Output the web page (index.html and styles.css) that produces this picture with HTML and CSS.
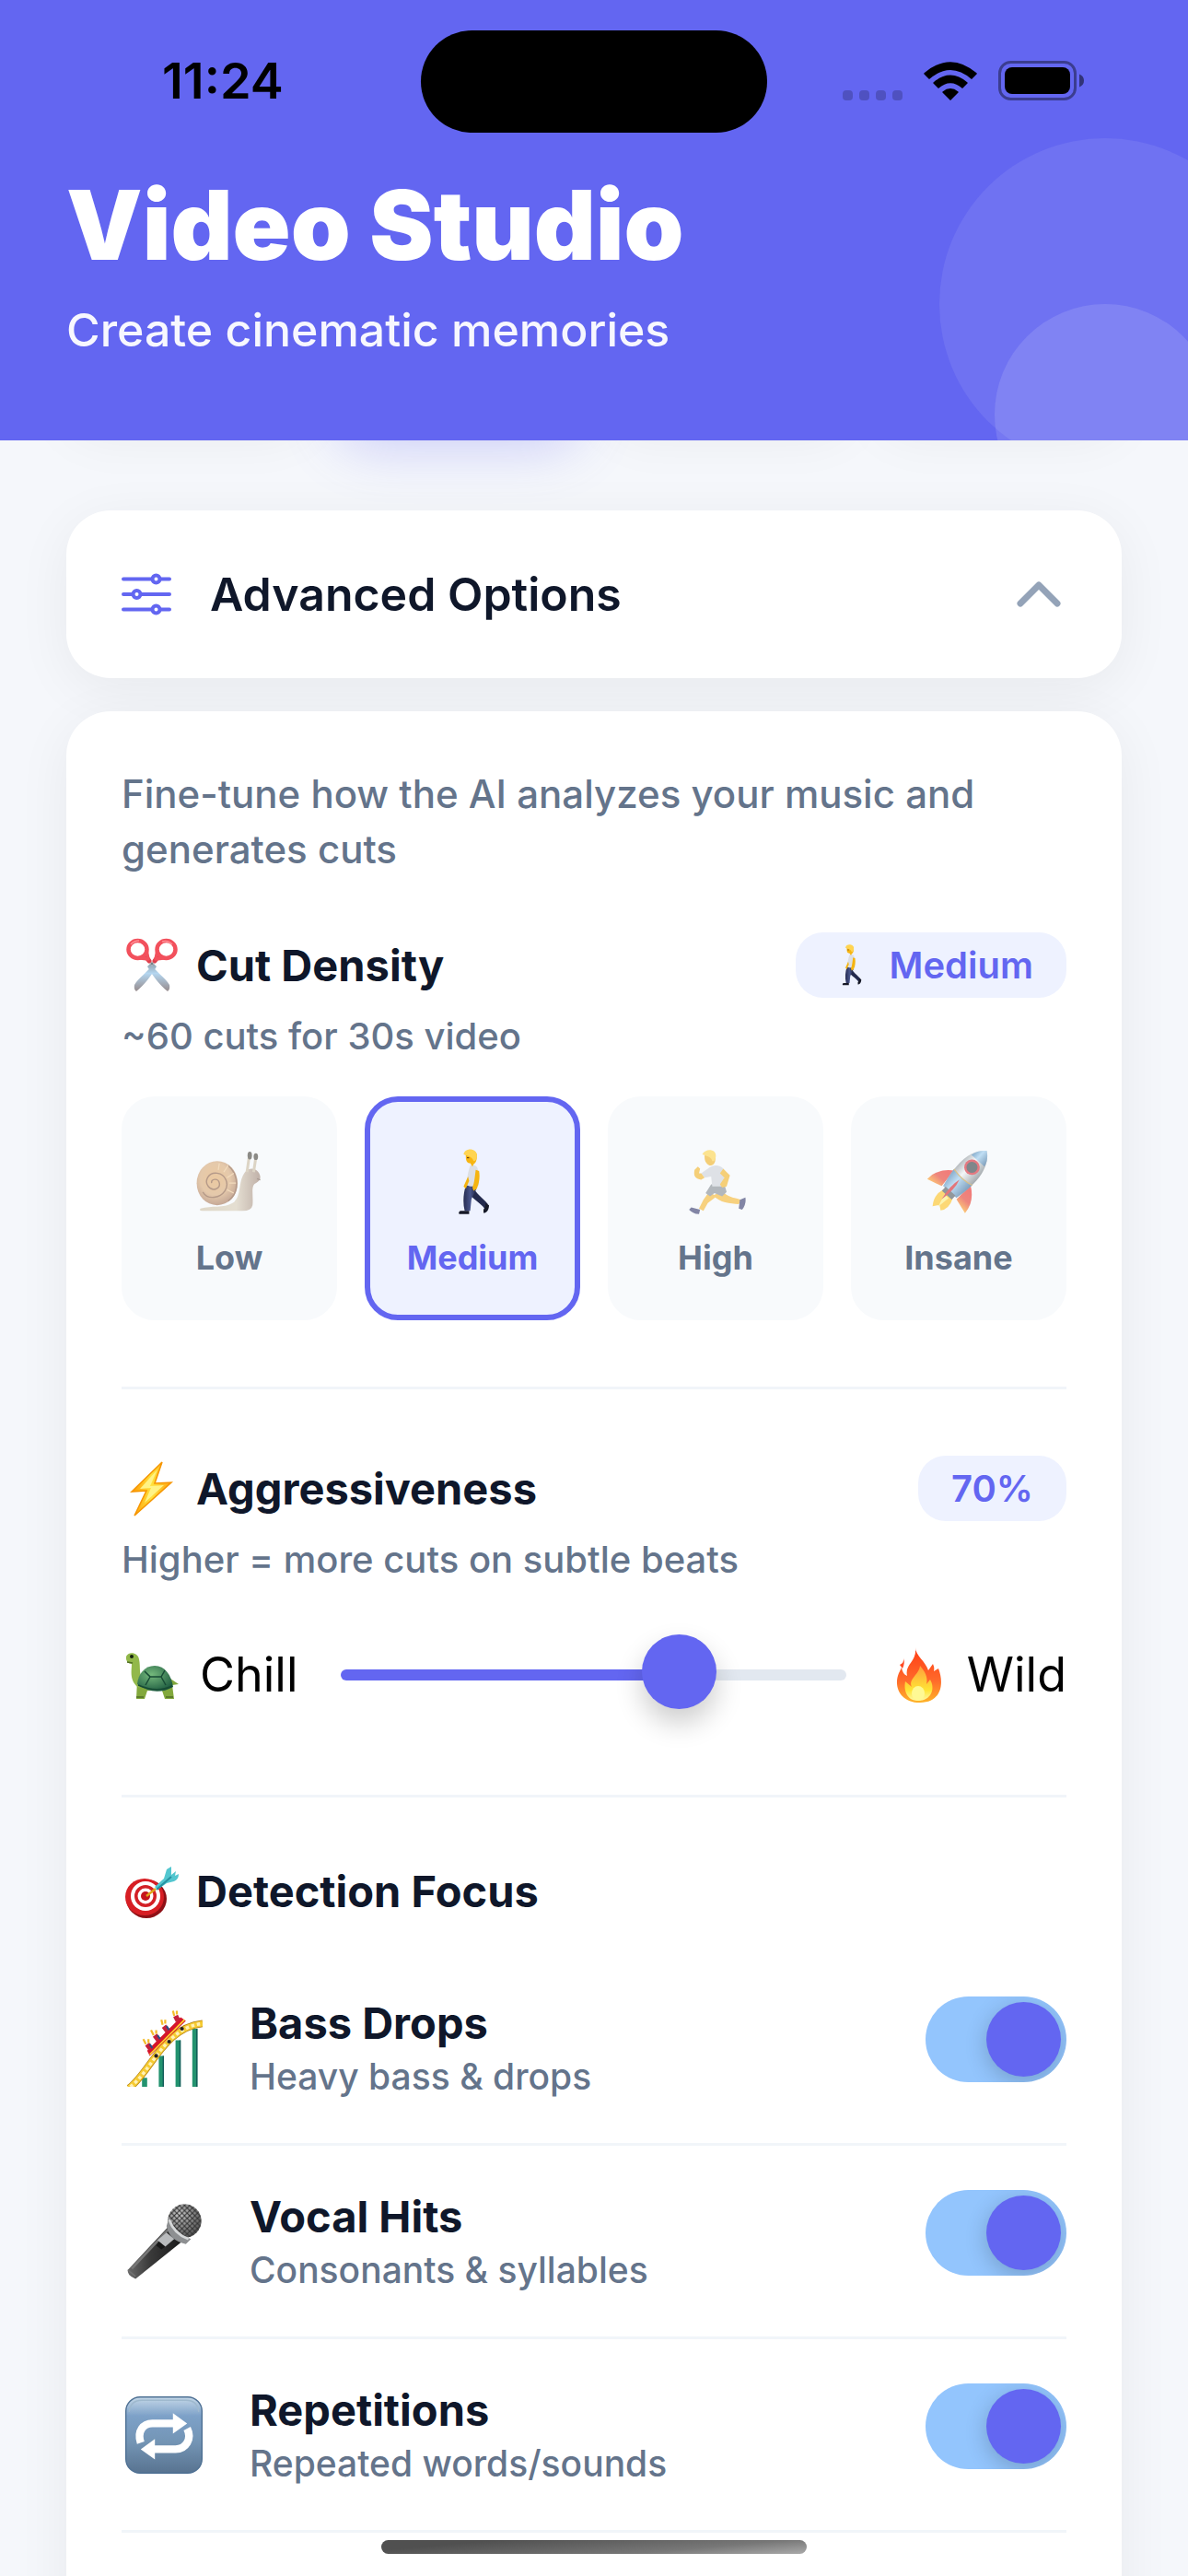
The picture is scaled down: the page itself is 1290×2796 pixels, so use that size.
FILE: index.html
```html
<!DOCTYPE html>
<html lang="en">
<head>
<meta charset="UTF-8">
<meta name="viewport" content="width=device-width, initial-scale=1.0">
<title>Video Studio</title>
<link rel="stylesheet" href="styles.css">
</head>
<body>
    <!-- Icon set -->
    <svg class="sprite" aria-hidden="true">
        <defs>
            <linearGradient id="blade" x1="0" y1="0" x2="0" y2="1"><stop offset="0" stop-color="#8fa0ab"/><stop offset=".35" stop-color="#b4d6f0"/><stop offset="1" stop-color="#968b8c"/></linearGradient>
            <linearGradient id="bolt-fill" x1="0" y1="0" x2="1" y2="0"><stop offset="0" stop-color="#ff9800"/><stop offset=".5" stop-color="#ffe23d"/><stop offset="1" stop-color="#ffa210"/></linearGradient>
            <linearGradient id="flame" x1="0" y1="0" x2="0" y2="1"><stop offset="0" stop-color="#ff3c14"/><stop offset=".6" stop-color="#ff6a2b"/><stop offset="1" stop-color="#ffb327"/></linearGradient>
            <linearGradient id="flame-core" x1="0" y1="0" x2="0" y2="1"><stop offset="0" stop-color="#ff9d3c"/><stop offset=".7" stop-color="#ffe535"/><stop offset="1" stop-color="#fff9a8"/></linearGradient>
            <radialGradient id="shell" cx=".45" cy=".4" r=".6"><stop offset="0" stop-color="#e3a965"/><stop offset=".6" stop-color="#d9a976"/><stop offset="1" stop-color="#a57455"/></radialGradient>
            <linearGradient id="slug" x1="0" y1="0" x2="1" y2="0"><stop offset="0" stop-color="#cfc1a5"/><stop offset=".6" stop-color="#d8cdb6"/><stop offset="1" stop-color="#9c8172"/></linearGradient>
            <radialGradient id="turtle-shell" cx=".4" cy=".35" r=".7"><stop offset="0" stop-color="#75b97c"/><stop offset="1" stop-color="#1d5b40"/></radialGradient>
            <linearGradient id="hull" x1="0" y1="0" x2="1" y2="0"><stop offset="0" stop-color="#8d9499"/><stop offset=".4" stop-color="#f2f4f5"/><stop offset="1" stop-color="#70787e"/></linearGradient>
            <linearGradient id="hull-blue" x1="0" y1="0" x2="1" y2="0"><stop offset="0" stop-color="#3c79ac"/><stop offset=".4" stop-color="#9ccdf0"/><stop offset="1" stop-color="#2f6393"/></linearGradient>
            <linearGradient id="fin" x1="0" y1="0" x2="0" y2="1"><stop offset="0" stop-color="#ef2222"/><stop offset=".6" stop-color="#e83a2a"/><stop offset="1" stop-color="#ffa51f"/></linearGradient>
            <linearGradient id="mic-body" x1="0" y1="0" x2="1" y2="0"><stop offset="0" stop-color="#6b6b6b"/><stop offset=".4" stop-color="#3b3b3b"/><stop offset="1" stop-color="#191919"/></linearGradient>
            <radialGradient id="mic-head" cx=".35" cy=".3" r=".8"><stop offset="0" stop-color="#c9c9c9"/><stop offset="1" stop-color="#4a4a4a"/></radialGradient>
            <pattern id="mesh" width="4" height="4" patternUnits="userSpaceOnUse"><path d="M0 0l4 4M4 0l-4 4" stroke="#333" stroke-width=".8"/></pattern>
            <linearGradient id="key" x1="0" y1="0" x2="0" y2="1"><stop offset="0" stop-color="#c5d8e8"/><stop offset=".25" stop-color="#7da1c8"/><stop offset=".6" stop-color="#7394b4"/><stop offset="1" stop-color="#587390"/></linearGradient>
            <linearGradient id="trousers" x1="0" y1="0" x2="1" y2="0"><stop offset="0" stop-color="#252b50"/><stop offset=".5" stop-color="#48558a"/><stop offset="1" stop-color="#202544"/></linearGradient>
        </defs>

        <symbol id="scissors" viewBox="0 0 60 60">
            <path d="M28 28C34 36 45 44 49 51Q50 56 47 58C39 52 30 40 25 31Z" fill="url(#blade)"/>
            <path d="M32 28C26 36 15 44 11 51Q10 56 13 58C21 52 30 40 35 31Z" fill="url(#blade)"/>
            <circle cx="30" cy="28" r="1.700" fill="#777e85"/>
            <path d="M27 25L24 21M33 25L36 21" stroke="#dd3f4c" stroke-width="5" stroke-linecap="round"/>
            <ellipse cx="14.500" cy="12.500" rx="10" ry="9.500" fill="none" stroke="#f2505c" stroke-width="4.500"/>
            <ellipse cx="45.500" cy="12.500" rx="10" ry="9.500" fill="none" stroke="#f2505c" stroke-width="4.500"/>
            <path d="M24 13l2 10-9-1M36 13l-2 10 9-1" fill="none" stroke="#f2505c" stroke-width="3.500" stroke-linejoin="round"/>
            <path d="M7 7q4-4 9-4M41 4q6-2 11 3" fill="none" stroke="#ff8e95" stroke-width="1.500"/>
        </symbol>

        <symbol id="walker" viewBox="0 0 60 60">
            <path d="M30 33c3 8 9 11 14 17l-3 4c-4-6-13-9-15-17z" fill="#232a4d"/>
            <path d="M24 33h10c0 5-4 9-5 13l-1 10h-5c-2-8-1-16 1-23z" fill="url(#trousers)"/>
            <path d="M19 56h8v3h-9q-1-2 1-3zM42 49l3 2c0 4-2 7-5 7v-3q2-2 2-6z" fill="#161927"/>
            <path d="M28 15c5-1 7 1 7 5l1 13q-5 2-11 0c0-8 1-12 3-18z" fill="#dcdfe4"/>
            <path d="M33 19l3 1c1 6 0 11-2 16l-3 2-1-3c2-5 2-9 3-16zM26 25l-4 9 2 2 3-7z" fill="#f5b40f"/>
            <path d="M24 5c1-5 9-5 10 0 0 4 0 7-3 9l-1 2-2-3c-4 0-4-4-4-8z" fill="#f7b512"/>
            <path d="M22 5c1-7 13-6 12 2 0 2-1 4-3 4-1-4-4-4-9-6z" fill="#ffd451"/>
            <path d="M25 8h2" stroke="#6b4510"/>
        </symbol>

        <symbol id="snail" viewBox="0 0 60 60">
            <path d="M4 54C14 51 25 54 33 49C41 44 38 31 43 23C47 16 54 17 57 22Q60 28 54 31C49 33 52 43 51 51Q50 56 42 56H6Q2 56 4 54Z" fill="url(#slug)"/>
            <path d="M46 21L48 7M52 21L54 8" stroke="#cabca1" stroke-width="2.500"/>
            <ellipse cx="48.500" cy="6" rx="2" ry="3.500" fill="#444038"/><ellipse cx="54" cy="7" rx="2" ry="3" fill="#444038"/>
            <ellipse cx="19" cy="31" rx="18.500" ry="20" fill="url(#shell)"/>
            <path d="M29 47C39 40 39 24 29 15M14 31c-1-4 6-5 7 0s-6 8-10 3 0-13 8-12 11 10 7 16-15 9-20 1" fill="none" stroke="#8a5c3e" stroke-width="1.200"/>
            <path d="M21 13l-1 6M29 15l-4 6M34 22l-6 4M36 31h-6M34 40l-6-3" stroke="#f0c894" stroke-width="1"/>
            <path d="M55 27l3 1" stroke="#765e50"/>
        </symbol>

        <symbol id="runner" viewBox="0 0 60 60">
            <path d="M24 39l7 4-8 6-4 7-4-2 4-8zM36 38c5 6 10 6 17 8l-2 4c-8-1-17-1-23-8z" fill="#f7b62d"/>
            <path d="M8 53l8 2-1 4c-4 0-7-2-9-4zM52 46l5-2q1 6-3 11l-3-1z" fill="#34396c"/>
            <path d="M26 32h12l2 7-4 4-7-3-4 3-4-3z" fill="#858b93"/>
            <path d="M23 18c4-4 11-4 14 0l1 7-1 9H27l-1-9-6 1-3-4z" fill="#cdd2d8"/>
            <path d="M37 18l6 6-3 10-4 1-2-3 4-6-4-4zM17 22l3 4-3 2c-6-1-7-4-6-9l3-3 2 2-1 4z" fill="#f4b322"/>
            <path d="M20 7c0-6 9-6 10 0 0 5-1 7-4 8-4 0-6-4-6-8z" fill="#f3b11e"/>
            <path d="M18 5c3-6 14-5 12 3q-1 4-3 3c-1-4-4-4-9-6z" fill="#ffd448"/>
        </symbol>

        <symbol id="rocket" viewBox="0 0 60 60">
            <g transform="rotate(42 30 30)">
                <path d="M20 25Q7 34 7 47l14-4zM40 25q13 9 13 22l-14-4z" fill="url(#fin)"/>
                <path d="M24 45h12q4 9-1 15l-4-3-4 5q-6-8-3-17z" fill="#ffc21c"/>
                <path d="M28 47h5l-2 12z" fill="#fff17d"/>
                <path d="M30-8c11 8 14 25 8 50H22C16 17 19 0 30-8z" fill="url(#hull)"/>
                <path d="M30-8c4 3 7 7 8 12H22c1-5 4-9 8-12z" fill="url(#hull-blue)"/>
                <path d="M19 24q11 3 22 0-1 9-3 18H22q-2-9-3-18z" fill="url(#hull-blue)"/>
                <path d="M19 24q11 3 22 0" stroke="#c69b3b" fill="none"/>
                <circle cx="30" cy="12" r="7" fill="#d82430"/><circle cx="30" cy="12" r="5" fill="#303a40"/>
                <path d="M24 41h12v5H24z" fill="#4d565c"/>
                <path d="M29 28q3 9 0 24-3-14 0-24z" fill="#d41f26"/>
            </g>
        </symbol>

        <symbol id="bolt" viewBox="0 0 60 60">
            <path d="M41 1L8 33l16-1L11 59l40-36-18 1z" fill="url(#bolt-fill)" stroke="#f69500" stroke-width="1.500"/>
            <path d="M36 9L17 30l12-1-7 16 21-19-15 1z" fill="#fff385"/>
        </symbol>

        <symbol id="turtle" viewBox="0 0 60 60">
            <path d="M14 36l-1 20h9l3-9h16l3 9h10l-2-15 7-1-9-6z" fill="#82a83c"/>
            <path d="M2 10C4 4 15 5 16 13c2 9-1 16 5 23l-5 8C5 37 8 25 8 18Q1 17 2 10z" fill="#92b84a"/>
            <path d="M14 40c1-11 8-20 19-20s18 10 20 23q-20 11-39-3z" fill="url(#turtle-shell)"/>
            <path d="M15 41q20 9 37 1M22 26l6 6-5 9M28 32h12l4-7M40 32l5 9" stroke="#174b35" stroke-width="1.500" fill="none"/>
            <circle cx="8" cy="10" r="2" fill="#14220e"/>
            <path d="M3 16l6 1M13 54h8M45 54h8" stroke="#506e24" stroke-width="1.500"/>
        </symbol>

        <symbol id="fire" viewBox="0 0 60 60">
            <path d="M26 0c0 9 11 15 14 25l5-7q2 4 1 8l5-3c7 18 2 37-20 37C9 60 2 42 8 28l3-6q1 7 6 9c-3-13 11-15 9-31z" fill="url(#flame)"/>
            <path d="M9 19q5-2 4-7 2 5-1 11z" fill="#ff4921"/>
            <path d="M31 20c-1 10-13 14-9 23l-7-6c-2 10 2 21 14 21 14 0 19-13 13-23l-4 5c2-8-2-14-7-20z" fill="url(#flame-core)"/>
            <ellipse cx="29" cy="50" rx="7" ry="8" fill="#fff994"/>
        </symbol>

        <symbol id="target" viewBox="0 0 60 60">
            <ellipse cx="24" cy="38" rx="22" ry="21" fill="#8e1016"/>
            <ellipse cx="22" cy="36" rx="21" ry="20" fill="#d71e24"/>
            <ellipse cx="23" cy="35" rx="16" ry="16" fill="#fff"/><ellipse cx="23" cy="35" rx="12" ry="12" fill="#d32026"/>
            <ellipse cx="23" cy="35" rx="8.500" ry="8.500" fill="#fff"/><ellipse cx="23" cy="35" rx="5" ry="5" fill="#c5161d"/>
            <path d="M24 35l10-8" stroke="#e1a71b" stroke-width="2.500"/>
            <path d="M33 25l10-9 3-10 5-3v9l5-4-1 5 4-2q0 6-5 8l-8 2-10 7z" fill="#52c6cf"/>
            <path d="M35 28l16-14" stroke="#2691a1" stroke-width="2"/>
        </symbol>

        <symbol id="coaster" viewBox="0 0 60 60">
            <path d="M28 36v24M41 24v36M54 15v45M15 53v7" stroke="#23936f" stroke-width="4"/>
            <path d="M29.500 36v24M42.500 24v36M55.500 15v45" stroke="#135c59" stroke-width="1"/>
            <path d="M3 61C20 48 30 14 60 11" fill="none" stroke="#b17e12" stroke-width="5.500"/>
            <path d="M3 61C20 48 30 14 60 11" fill="none" stroke="#f6cb32" stroke-width="4.500"/>
            <path d="M4 60C21 47 31 14 60 11" fill="none" stroke="#fff1b6" stroke-width="2.500" stroke-dasharray="2.500 2"/>
            <path d="M17 32L43 6l4 3-28 27z" fill="#d6142a"/>
            <path d="M19 35L46 8" stroke="#ffd42b" stroke-width="1.200"/>
            <path d="M20 31l-3-4M26 24l-3-4M33 17l-3-4M41 9l-2-4" stroke="#c5213a" stroke-width="4"/>
            <path d="M21 30l-2-3M27 23l-2-3M34 16l-2-3" stroke="#294f85" stroke-width="1.500"/>
            <path d="M16 27l-2-4M18 26v-3M22 20l-2-4M24 19v-3M29 12l-1-4M31 11V8M38 5l-1-4M40 4V1" stroke="#f3bd2b" stroke-width="1.600"/>
            <circle cx="24" cy="36" r="1.500" fill="#272021"/><circle cx="34" cy="25" r="1.500" fill="#272021"/><circle cx="44" cy="15" r="1.500" fill="#272021"/>
        </symbol>

        <symbol id="mic" viewBox="0 0 60 60">
            <path d="M33 19L2 52q-1 4 6 7l36-29z" fill="url(#mic-body)"/>
            <path d="M33 21L5 51" stroke="#777" stroke-width="2"/>
            <circle cx="46" cy="14" r="13" fill="url(#mic-head)"/><circle cx="46" cy="14" r="13" fill="url(#mesh)"/>
            <path d="M34 11q3 12 17 17l-4 4Q34 29 32 18z" fill="#8d8f91"/>
            <path d="M34 13q4 11 15 15" fill="none" stroke="#d6d8d9" stroke-width="2"/>
            <path d="M32 23l6 5-7 6-6-5z" fill="#b9bbbd"/><path d="M26 30l5 4-3 2-4-3z" fill="#171717"/>
            <path d="M2 52l6 5" stroke="#737373"/>
        </symbol>

        <symbol id="repeat" viewBox="0 0 60 60">
            <rect x=".5" y=".5" width="59" height="59" rx="11" fill="url(#key)" stroke="#4f7194"/>
            <path d="M3 12Q4 3 13 3h34q9 0 10 9" fill="none" stroke="#9fb9ce" stroke-width="1"/>
            <path d="M12 36c-3-9 2-15 9-15h17M48 25c4 8-1 16-9 16H22" fill="none" stroke="#fff" stroke-width="6"/>
            <path d="M37 13l11 8-11 8zM23 33L12 41l11 8z" fill="#fff"/>
        </symbol>
    </svg>

    <div class="app">
        <!-- Header -->
        <header class="header">
            <div class="status-bar">
                <span class="time">11:24</span>
                <div class="status-icons">
                    <span class="signal"><i></i><i></i><i></i><i></i></span>
                    <svg class="wifi" viewBox="0 0 58 42" aria-hidden="true">
                        <path d="M29 42L20.500 33.500Q20 33 20.500 32.400Q29 25.500 37.500 32.400Q38 33 37.500 33.500ZM16 29L10.500 23.500Q10 23 10.500 22.400Q29 6.500 47.500 22.400Q48 23 47.500 23.500L42 29Q29 17.500 16 29ZM6 19L.5 13.500Q0 13 .5 12.300Q29 -12 57.500 12.300Q58 13 57.500 13.500L52 19Q29 -1 6 19Z"/>
                    </svg>
                    <svg class="battery" viewBox="0 0 94 43" aria-hidden="true">
                        <rect x="1.500" y="1.500" width="82" height="40" rx="12" fill="none" stroke="#000" stroke-opacity=".4" stroke-width="3"/>
                        <rect x="7" y="7" width="71" height="29" rx="8"/>
                        <path d="M88 14.500q5 2 5 7t-5 7z" fill-opacity=".5"/>
                    </svg>
                </div>
            </div>
            <div class="island"></div>
            <div class="bubble bubble-large"></div>
            <div class="bubble bubble-small"></div>
            <div class="header-text">
                <h1 class="title">Video Studio</h1>
                <p class="subtitle">Create cinematic memories</p>
            </div>
        </header>

        <main class="content">
            <!-- Preset cards, scrolled under the header -->
            <div class="presets">
                <div class="preset"></div>
                <div class="preset active"></div>
                <div class="preset"></div>
                <div class="preset"></div>
            </div>

            <button class="advanced" type="button" aria-expanded="true">
                <svg class="sliders-icon" viewBox="0 0 54 48" fill="none" stroke="currentColor" stroke-width="4" stroke-linecap="round" aria-hidden="true">
                    <path d="M2 7.500h31M42 7.500h10M2 24h10M21 24h31M2 40.500h31M42 40.500h10"/>
                    <circle cx="37.500" cy="7.500" r="4"/><circle cx="16.500" cy="24" r="4"/><circle cx="37.500" cy="40.500" r="4"/>
                </svg>
                <span class="advanced-label">Advanced Options</span>
                <svg class="chevron" viewBox="0 0 48 28" fill="none" stroke="currentColor" stroke-width="7" stroke-linecap="round" stroke-linejoin="round" aria-hidden="true"><path d="M4 24L24 4l20 20"/></svg>
            </button>

            <div class="panel">
                <p class="description">Fine-tune how the AI analyzes your music and generates cuts</p>

                <!-- Cut density -->
                <section class="section">
                    <div class="section-head">
                        <svg class="emoji"><use href="#scissors"/></svg>
                        <h2 class="section-title">Cut Density</h2>
                        <span class="badge"><svg class="badge-emoji"><use href="#walker"/></svg>Medium</span>
                    </div>
                    <p class="hint">~60 cuts for 30s video</p>
                    <div class="density">
                        <button class="option" type="button"><svg class="option-emoji"><use href="#snail"/></svg>Low</button>
                        <button class="option selected" type="button"><svg class="option-emoji"><use href="#walker"/></svg>Medium</button>
                        <button class="option" type="button"><svg class="option-emoji"><use href="#runner"/></svg>High</button>
                        <button class="option" type="button"><svg class="option-emoji"><use href="#rocket"/></svg>Insane</button>
                    </div>
                </section>

                <!-- Aggressiveness -->
                <section class="section">
                    <div class="section-head">
                        <svg class="emoji"><use href="#bolt"/></svg>
                        <h2 class="section-title"><label for="aggressiveness">Aggressiveness</label></h2>
                        <span class="badge">70%</span>
                    </div>
                    <p class="hint">Higher = more cuts on subtle beats</p>
                    <div class="slider-row">
                        <span class="slider-label"><svg class="emoji"><use href="#turtle"/></svg>Chill</span>
                        <input class="slider" id="aggressiveness" type="range" min="0" max="100" value="70">
                        <span class="slider-label"><svg class="emoji"><use href="#fire"/></svg>Wild</span>
                    </div>
                </section>

                <!-- Detection focus -->
                <section class="section">
                    <div class="section-head">
                        <svg class="emoji"><use href="#target"/></svg>
                        <h2 class="section-title">Detection Focus</h2>
                    </div>
                    <div class="focus-list">
                        <div class="focus-row">
                            <svg class="focus-emoji"><use href="#coaster"/></svg>
                            <label class="focus-text" for="bass"><span class="focus-name">Bass Drops</span><span class="focus-note">Heavy bass &amp; drops</span></label>
                            <input class="toggle" id="bass" type="checkbox" checked>
                        </div>
                        <div class="focus-row">
                            <svg class="focus-emoji"><use href="#mic"/></svg>
                            <label class="focus-text" for="vocal"><span class="focus-name">Vocal Hits</span><span class="focus-note">Consonants &amp; syllables</span></label>
                            <input class="toggle" id="vocal" type="checkbox" checked>
                        </div>
                        <div class="focus-row">
                            <svg class="focus-emoji"><use href="#repeat"/></svg>
                            <label class="focus-text" for="repetitions"><span class="focus-name">Repetitions</span><span class="focus-note">Repeated words/sounds</span></label>
                            <input class="toggle" id="repetitions" type="checkbox" checked>
                        </div>
                    </div>
                </section>
            </div>
        </main>
        <div class="home-indicator"></div>
    </div>
</body>
</html>
```

FILE: styles.css
```css
* {
    margin: 0;
    padding: 0;
    box-sizing: border-box;
}

body {
    font-family: Inter, "Liberation Sans", sans-serif;
    background-color: #f5f7fb;
    color: #0f172a;
}

button {
    border: none;
    font-family: inherit;
    cursor: pointer;
}

.sprite {
    position: absolute;
    width: 0;
    height: 0;
}

.app {
    position: relative;
    display: flex;
    flex-direction: column;
    height: 100vh;
    overflow: hidden;
}

/* Header */
.header {
    position: relative;
    z-index: 2;
    flex-shrink: 0;
    padding-bottom: 90px;
    background-color: #6366f1;
    overflow: hidden;
}

.status-bar {
    display: flex;
    justify-content: space-between;
    align-items: center;
    height: 174px;
    padding: 0 112px 0 176px;
    color: black;
}

.time {
    font-size: 54px;
    font-weight: 600;
}

.status-icons {
    display: flex;
    align-items: flex-end;
    gap: 23px;
}

.signal {
    display: flex;
    gap: 7px;
}

.signal i {
    width: 11px;
    height: 11px;
    border-radius: 4px;
    background-color: rgba(0, 0, 0, 0.2);
}

.wifi {
    width: 58px;
    height: 42px;
}

.battery {
    width: 94px;
    height: 43px;
}

.island {
    position: absolute;
    top: 33px;
    left: 50%;
    width: 376px;
    height: 111px;
    margin-left: -188px;
    border-radius: 56px;
    background-color: black;
}

.bubble {
    position: absolute;
    border-radius: 50%;
}

.bubble-large {
    top: 150px;
    right: -90px;
    width: 360px;
    height: 360px;
    background-color: rgba(255, 255, 255, 0.08);
}

.bubble-small {
    top: 330px;
    right: -30px;
    width: 240px;
    height: 240px;
    background-color: rgba(255, 255, 255, 0.12);
}

.header-text {
    padding: 10px 72px 0;
    color: white;
}

.title {
    font-size: 104px;
    font-weight: 900;
    line-height: 120px;
}

.subtitle {
    margin-top: 24px;
    font-size: 50px;
    font-weight: 500;
    line-height: 60px;
    opacity: 0.95;
}

/* Content */
.content {
    flex: 1;
    display: flex;
    flex-direction: column;
    padding: 0 72px;
}

.presets {
    display: flex;
    gap: 30px;
    height: 200px;
    margin-top: -218px;
    margin-bottom: 94px;
}

.preset {
    flex: 1;
    border-radius: 36px;
    background-color: white;
    box-shadow: 0 12px 60px rgba(0, 0, 0, 0.06);
}

.preset.active {
    background-color: #6366f1;
    box-shadow: 0 24px 60px rgba(99, 102, 241, 0.3);
}

.advanced {
    display: flex;
    align-items: center;
    height: 182px;
    padding: 0 66px 0 60px;
    border-radius: 48px;
    background-color: white;
    box-shadow: 0 12px 60px rgba(0, 0, 0, 0.06);
    color: #0f172a;
}

.sliders-icon {
    width: 54px;
    height: 48px;
    color: #6366f1;
}

.advanced-label {
    margin-left: 42px;
    font-size: 50px;
    font-weight: 600;
}

.chevron {
    width: 48px;
    height: 28px;
    margin-left: auto;
    color: #94a3b8;
}

.panel {
    flex: 1;
    margin-top: 36px;
    padding: 60px 60px 0;
    border-radius: 48px 48px 0 0;
    background-color: white;
    box-shadow: 0 12px 60px rgba(0, 0, 0, 0.06);
}

.description {
    margin-bottom: 60px;
    font-size: 42px;
    font-weight: 500;
    line-height: 60px;
    color: #64748b;
}

/* Sections */
.section {
    padding-bottom: 72px;
    margin-bottom: 72px;
    border-bottom: 3px solid #f1f5f9;
}

.section:last-child {
    border-bottom: none;
}

.section-head {
    display: flex;
    align-items: center;
    min-height: 58px;
}

.emoji {
    width: 60px;
    height: 60px;
    margin: 0 18px 0 3px;
}

.section-title {
    font-size: 47px;
    font-weight: 700;
    line-height: 58px;
}

.badge {
    display: flex;
    align-items: center;
    height: 71px;
    margin-left: auto;
    padding: 0 36px;
    border-radius: 30px;
    background-color: #eef2ff;
    font-size: 40px;
    font-weight: 600;
    color: #6366f1;
}

.badge-emoji {
    width: 48px;
    height: 45px;
    margin-right: 18px;
}

.hint {
    margin-top: 18px;
    font-size: 40px;
    font-weight: 500;
    line-height: 48px;
    color: #64748b;
}

/* Density buttons */
.density {
    display: flex;
    gap: 30px;
    margin-top: 41px;
}

.option {
    flex: 1;
    display: flex;
    flex-direction: column;
    align-items: center;
    justify-content: center;
    gap: 24px;
    height: 243px;
    padding-top: 10px;
    border: 6px solid #f8fafc;
    border-radius: 36px;
    background-color: #f8fafc;
    font-size: 36px;
    font-weight: 700;
    line-height: 44px;
    color: #64748b;
}

.option.selected {
    border-color: #6366f1;
    background-color: #eef2ff;
    color: #6366f1;
}

.option-emoji {
    width: 72px;
    height: 72px;
    opacity: 0.6;
}

.option.selected .option-emoji {
    opacity: 1;
}

/* Slider */
.slider-row {
    display: flex;
    align-items: center;
    gap: 46px;
    margin-top: 60px;
    margin-bottom: 18px;
}

.slider-label {
    display: flex;
    align-items: center;
    font-size: 52px;
    line-height: 81px;
    color: black;
}

.slider-label .emoji {
    margin-right: 22px;
}

.slider {
    flex: 1;
    min-width: 0;
    height: 81px;
    background: transparent;
    appearance: none;
}

.slider::-webkit-slider-runnable-track {
    height: 12px;
    border-radius: 6px;
    background: linear-gradient(90deg, #6366f1 68%, #e2e8f0 68%);
}

.slider::-webkit-slider-thumb {
    appearance: none;
    width: 81px;
    height: 81px;
    margin-top: -38px;
    border-radius: 50%;
    background-color: #6366f1;
    box-shadow: 0 15px 30px rgba(0, 0, 0, 0.2);
}

/* Detection rows */
.focus-list {
    margin-top: 36px;
}

.focus-row {
    display: flex;
    align-items: flex-start;
    padding: 48px 0;
    border-bottom: 3px solid #f1f5f9;
}

.focus-emoji {
    align-self: center;
    width: 84px;
    height: 84px;
    margin: 0 51px 0 4px;
}

.focus-text {
    flex: 1;
    display: flex;
    flex-direction: column;
    gap: 5px;
}

.focus-name {
    font-size: 47px;
    font-weight: 700;
    line-height: 58px;
}

.focus-note {
    font-size: 39px;
    font-weight: 500;
    line-height: 48px;
    color: #64748b;
}

.toggle {
    position: relative;
    width: 153px;
    height: 93px;
    border-radius: 47px;
    background-color: #93c5fd;
    overflow: hidden;
    appearance: none;
}

.toggle::before {
    content: "";
    position: absolute;
    top: 6px;
    left: 6px;
    width: 81px;
    height: 81px;
    border-radius: 50%;
    background-color: #6366f1;
    box-shadow: 0 6px 24px rgba(0, 0, 0, 0.2);
}

.toggle:checked::before {
    left: 66px;
}

.home-indicator {
    position: absolute;
    z-index: 3;
    bottom: 24px;
    left: 50%;
    width: 462px;
    height: 15px;
    margin-left: -231px;
    border-radius: 8px;
    background: linear-gradient(175deg, #505050 20%, #777 70%, #aaa);
}
```
